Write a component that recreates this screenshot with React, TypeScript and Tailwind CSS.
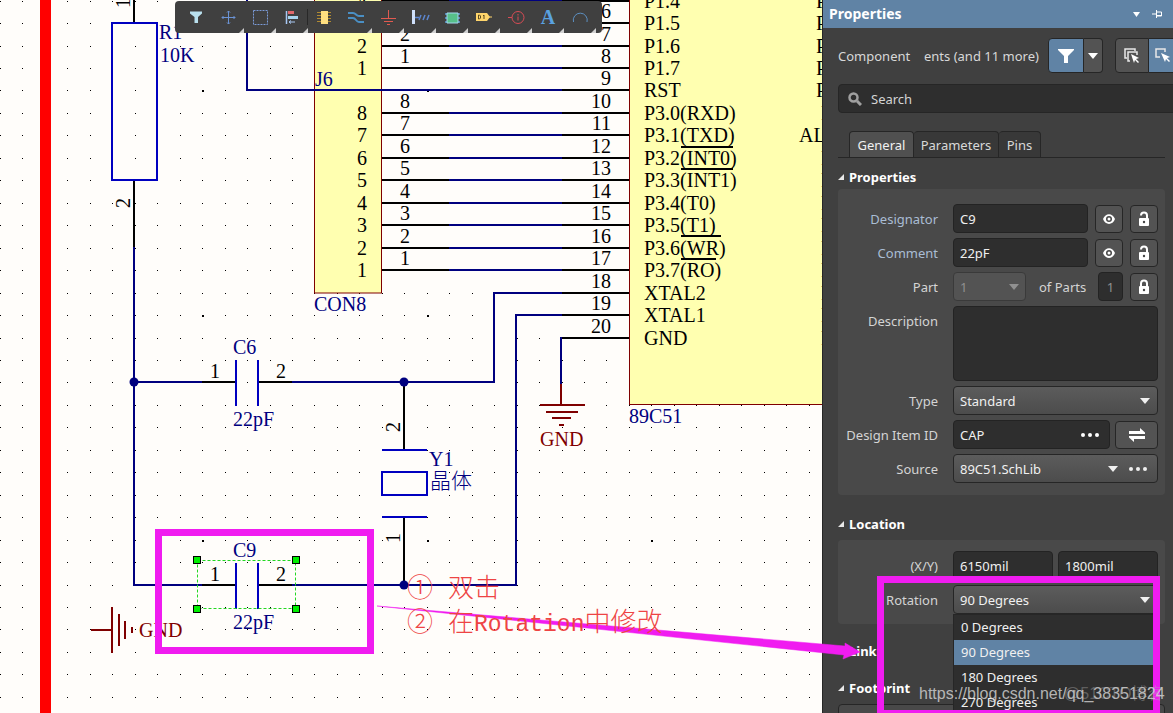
import type { ReactNode } from 'react'

const PITCH = 22.46
const ROW = (i: number) => Math.round(0.6 + i * PITCH)

const WIRE = '#00007f'
const BODY = '#0000c0'
const POWER = '#7f0000'
const FILL = '#ffffb0'
const MARK = '#f01cf0'

const CHIP_PINS = ['P1.4', 'P1.5', 'P1.6', 'P1.7', 'RST', 'P3.0(RXD)', 'P3.1(TXD)', 'P3.2(INT0)', 'P3.3(INT1)', 'P3.4(T0)', 'P3.5(T1)', 'P3.6(WR)', 'P3.7(RO)', 'XTAL2', 'XTAL1', 'GND']

// row index -> connector pin
const CONNECTOR_PINS = [
    [0, 4], [1, 3], [2, 2], [3, 1],
    [5, 8], [6, 7], [7, 6], [8, 5], [9, 4], [10, 3], [11, 2], [12, 1],
]

function gridPath() {
    let d = ''
    for (let i = 0; i < 90; i++) {
        for (let j = 0; j < 60; j++) {
            const size = i % 10 === 9 && j % 10 === 4 ? 2 : 1
            d += `M${Math.round(i * PITCH)} ${ROW(j)}h${size}v${size}h-${size}z`
        }
    }
    return d
}

const GRID = gridPath()

function Capacitor({ y, name }: { y: number; name: string }) {
    return (
        <g>
            <path d={`M202 ${y}H236M258 ${y}H292`} stroke="#000" />
            <path d={`M236 ${y - 22}v46M258 ${y - 22}v46`} stroke={BODY} />
            <g stroke="none">
                <text x="233" y={y - 28} fill={WIRE}>{name}</text>
                <text x="233" y={y + 44} fill={WIRE}>22pF</text>
                <text x="210" y={y - 4}>1</text>
                <text x="276" y={y - 4}>2</text>
            </g>
        </g>
    )
}

function Schematic() {
    return (
        <svg className="block h-full w-full font-['Liberation_Serif','Noto_Sans_CJK_SC',serif] text-[20px]" role="img" aria-label="Schematic">
            <path d={GRID} fill="#000" shapeRendering="crispEdges" />
            <rect x="40" y="0" width="11" height="100%" fill="#ff0000" />

            <g strokeWidth="1" stroke={POWER} fill={FILL}>
                <rect x="314.5" y="-10" width="67" height="303" />
                <rect x="629.5" y="-10" width="400" height="414.500" />
            </g>

            <g strokeWidth="2" fill="none" stroke={WIRE}>
                {CONNECTOR_PINS.map(([row]) => (
                    <path key={row} d={`M448 ${ROW(row)}H563`} />
                ))}
                <path d="M247 0V90H563" />
                <path d="M563 293H494V382H290" />
                <path d="M563 315H516V585H290" />
                <path d="M561 337V384" />
                <path d="M134 246V585H203M134 382H203" />
            </g>

            <g strokeWidth="2" fill="none" stroke="#000">
                {CONNECTOR_PINS.map(([row]) => (
                    <path key={row} d={`M382 ${ROW(row)}H449`} />
                ))}
                {CHIP_PINS.map((pin, row) => (
                    <path key={pin} d={`M562 ${ROW(row)}H629`} />
                ))}
                <path d="M134 0V23M134 181V247" />
                <path d="M404 382V450M404 517V585" />
                <path d="M681 147H733M681 169H733M681 236H721M681 259H716" />
            </g>

            <g strokeWidth="2" fill="none" stroke={BODY}>
                <rect x="112" y="23" width="45" height="157" />
                <path d="M382 450H427M382 517H427" />
                <rect x="382" y="472" width="45" height="23" />
            </g>

            <g strokeWidth="2" fill="none" stroke={POWER}>
                <path d="M561 384V405M540 405H585M546 412H578M552 418H571M559 425H564" />
                <path d="M91 630H112M112 607V653M119 614V646M125 621V639M132 627V633" />
            </g>

            <g fill={WIRE}>
                <circle cx="134" cy="382" r="4.5" />
                <circle cx="404" cy="382" r="4.5" />
                <circle cx="404" cy="585" r="4.5" />
            </g>

            <g strokeWidth="2" fill="#000">
                <Capacitor y={382} name="C6" />
                <Capacitor y={585} name="C9" />
            </g>

            <rect x="197.5" y="560.5" width="98" height="48" fill="none" stroke="#22d822" strokeDasharray="3 2" />
            <g fill="#00f000" stroke="#000">
                <rect x="193.5" y="556.5" width="7" height="7" />
                <rect x="292.5" y="556.5" width="7" height="7" />
                <rect x="193.5" y="605.5" width="7" height="7" />
                <rect x="292.5" y="605.5" width="7" height="7" />
            </g>

            <g fill="#000">
                {CONNECTOR_PINS.map(([row, pin]) => (
                    <g key={row}>
                        <text x="367" y={ROW(row) + 7} textAnchor="end">{pin}</text>
                        <text x="400" y={ROW(row) - 5}>{pin}</text>
                    </g>
                ))}
                {CHIP_PINS.map((pin, row) => (
                    <g key={pin}>
                        <text x="644" y={ROW(row) + 7}>{pin}</text>
                        <text x="611" y={ROW(row) - 5} textAnchor="end">{row + 5}</text>
                        <text x={row < 5 ? 816 : row === 6 ? 799 : 821} y={ROW(row) + 7}>{row === 6 ? 'ALE' : 'P'}</text>
                    </g>
                ))}
                <text transform="translate(130 8) rotate(-90)">1</text>
                <text transform="translate(130 208) rotate(-90)">2</text>
                <text transform="translate(400 432) rotate(-90)">2</text>
                <text transform="translate(400 543) rotate(-90)">1</text>
            </g>

            <g fill={WIRE}>
                <text x="159" y="39">R1</text>
                <text x="160" y="62">10K</text>
                <text x="315" y="86">J6</text>
                <text x="314" y="311">CON8</text>
                <text x="629" y="423">89C51</text>
                <text x="429" y="466">Y1</text>
                <text x="430" y="488" className="text-[21px] font-light">晶体</text>
            </g>
            <g fill={POWER}>
                <text x="540" y="446">GND</text>
                <text x="139" y="637">GND</text>
            </g>
        </svg>
    )
}

const TOOLS: { name: string; menu?: boolean; icon: ReactNode }[] = [
    { name: 'Filter', icon: <path d="M4 4.500h12v2L12 10v6H8.500v-6L4 6.500z" fill="#b9e0ee" /> },
    { name: 'Move', menu: true, icon: <path d="M10.500 4v13M4 10.500h13M9 5.500l1.500-1.500L12 5.500M9 15.500l1.500 1.500 1.500-1.500M5.500 9L4 10.500 5.500 12M15.500 9l1.500 1.500-1.500 1.500" stroke="#6a92d4" /> },
    { name: 'Select area', menu: true, icon: <rect x="3.500" y="3.500" width="14" height="14" stroke="#7a9bd8" strokeDasharray="2 1" /> },
    {
        name: 'Align', menu: true,
        icon: <><path d="M4.500 4v13" stroke="#a8c8f4" strokeWidth="1.500" /><path d="M6 4h6v3H6z" fill="#e0686c" /><path d="M6 9h10v3H6z" fill="#a8d4ee" /><path d="M7 15h6M9 13.500L7 15l2 1.500" stroke="#a8c8f4" /></>,
    },
    {
        name: 'Place part',
        icon: <><path d="M3 5.500h14M3 8.500h14M3 11.500h14M3 14.500h14" stroke="#b08a32" /><path d="M7 4h7v13H7z" fill="#ffdf80" /></>,
    },
    { name: 'Wire', menu: true, icon: <path d="M2 6h5c3 0 3 3 6 3h5M2 11h5c3 0 3 4 6 4h5" stroke="#4a8fc4" strokeWidth="2" /> },
    { name: 'Power port', menu: true, icon: <path d="M10.500 3v8M3 11.500h15M6 14.500h9M9 17.500h3" stroke="#e25a50" /> },
    {
        name: 'Harness', menu: true,
        icon: <><path d="M2 3h3v14H2z" fill="#cfe0fb" /><path d="M5 10.500h4M9 13l2-5M13 13l2-5M17 13l2-5" stroke="#5c86d0" strokeWidth="1.500" /></>,
    },
    {
        name: 'Sheet symbol', menu: true,
        icon: <><path d="M3 7h15M3 11h15M3 15h15" stroke="#5c9cd8" strokeWidth="1.500" /><path d="M5 6h11v10H5z" fill="#57c08a" stroke="#a5d8f0" /></>,
    },
    {
        name: 'Port', menu: true,
        icon: <><path d="M2 6h11l3 4-3 4H2z" fill="#ffd56b" /><path d="M15 10h3" stroke="#ffd56b" /><path d="M4.500 8v4h1l1-1V9l-1-1zM9 9l1-1v4" stroke="#5a4a20" /></>,
    },
    {
        name: 'Directive', menu: true,
        icon: <><circle cx="12" cy="10.500" r="6" stroke="#d84c55" /><path d="M2 10.500h4M12 9.500v4M12 7v1.500" stroke="#d84c55" /></>,
    },
    { name: 'Text', menu: true, icon: <text x="10" y="17" textAnchor="middle" fill="#5aa2e0" className="font-['Liberation_Serif',serif] text-[20px] font-bold">A</text> },
    { name: 'Arc', menu: true, icon: <path d="M3.500 15a7 7 0 1 1 13.500 0" stroke="#5c8fc0" /> },
]

function Toolbar() {
    return (
        <div className="absolute left-[175px] top-px flex h-8 w-[427px] rounded-sm bg-[#404040] pl-[5px]">
            {TOOLS.map(tool => (
                <button key={tool.name} aria-label={tool.name} className="relative flex w-8 shrink-0 items-center justify-center">
                    <svg width="20" height="20" viewBox="0 0 20 20" fill="none">{tool.icon}</svg>
                    {tool.menu && (
                        <svg className="absolute bottom-0 right-0" width="5" height="5"><path d="M5 0v5H0z" fill="#d0d0d0" /></svg>
                    )}
                    {tool.name === 'Align' && <span className="absolute right-0 top-2 h-4 w-px bg-[#282828]" />}
                </button>
            ))}
        </div>
    )
}

const FIELD = 'h-[29px] min-w-0 rounded border border-[#232323] bg-[#2e2e2e] px-1.5 text-[#f0f0f0] outline-none'
const RAISED = 'rounded border border-[#262626] bg-linear-to-b from-[#5c5c5c] to-[#4c4c4c] text-[#f0f0f0] outline-none'
const ICON_BUTTON = 'flex h-7 w-7 shrink-0 items-center justify-center rounded border border-[#262626] bg-[#535353]'

function Caret({ className }: { className?: string }) {
    return <svg className={className} width="10" height="6"><path d="M0 0h10L5 6z" fill="currentColor" /></svg>
}

function Dots() {
    return (
        <svg width="18" height="4" fill="currentColor">
            <circle cx="2" cy="2" r="2" /><circle cx="9" cy="2" r="2" /><circle cx="16" cy="2" r="2" />
        </svg>
    )
}

function EyeButton({ label }: { label: string }) {
    return (
        <button aria-label={label} className={ICON_BUTTON}>
            <svg width="12" height="10" viewBox="0 0 12 10">
                <path d="M0 5c2.500-6.500 9.500-6.500 12 0-2.500 6.500-9.500 6.500-12 0z" fill="#fff" />
                <circle cx="6" cy="5" r="3" fill="#484848" />
                <circle cx="6" cy="5" r="1.500" fill="#fff" />
            </svg>
        </button>
    )
}

function LockButton({ label, locked }: { label: string; locked?: boolean }) {
    return (
        <button aria-label={label} className={ICON_BUTTON}>
            <svg width="12" height="16" viewBox="0 0 12 16" fill="none">
                <path d={locked ? 'M3 8V4.500a3 3 0 0 1 6 0V8' : 'M3 4.500a3 3 0 0 1 6 0V8'} stroke="#fff" strokeWidth="2" />
                <rect x="1" y="7" width="10" height="8" rx="1" fill="#fff" />
                <circle cx="6" cy="11" r="1.200" fill="#444" />
            </svg>
        </button>
    )
}

function Row({ id, label, blue, top, children }: { id: string; label: string; blue?: boolean; top?: boolean; children: ReactNode }) {
    return (
        <div className={top ? 'flex items-start' : 'flex items-center'}>
            <label htmlFor={id} className={`w-[100px] shrink-0 text-right ${blue ? 'text-[#a9bdd4]' : 'text-[#d4d4d4]'} ${top ? 'pt-[5px]' : ''}`}>{label}</label>
            <div className="ml-[15px] flex min-w-0 flex-1 items-center">{children}</div>
        </div>
    )
}

function Heading({ children }: { children: ReactNode }) {
    return (
        <h2 className="flex h-5 items-center gap-[5px] font-bold text-white">
            <svg width="6" height="6"><path d="M6 0v6H0z" fill="#e8e8e8" /></svg>
            {children}
        </h2>
    )
}

function SelectBox({ id, value, children }: { id: string; value: string; children?: ReactNode }) {
    return (
        <div className="relative w-full text-[#f0f0f0]">
            <select id={id} className={`${RAISED} block h-[29px] w-full appearance-none px-1.5`}>
                <option>{value}</option>
            </select>
            <span className={`pointer-events-none absolute inset-y-0 flex items-center gap-[11px] ${children ? 'right-[11px]' : 'right-2'}`}>
                <Caret />
                {children}
            </span>
        </div>
    )
}

function RotationSelect() {
    const options = ['0 Degrees', '90 Degrees', '180 Degrees', '270 Degrees']
    return (
        <div className="relative w-full">
            <SelectBox id="rotation" value="90 Degrees" />
            <ul role="listbox" className="absolute inset-x-0 top-full z-10 border border-[#262626] bg-[#2e2e2e] text-[#f0f0f0]">
                {options.map(option => (
                    <li
                        key={option}
                        role="option"
                        aria-selected={option === '90 Degrees'}
                        className={`h-[25px] px-[7px] leading-[25px] ${option === '90 Degrees' ? 'bg-[#6083a5]' : ''}`}
                    >
                        {option}
                    </li>
                ))}
            </ul>
        </div>
    )
}

function PropertiesPanel() {
    return (
        <aside className="flex w-[351px] shrink-0 flex-col overflow-hidden border-l border-[#262626] bg-[#404040] font-['Noto_Sans',sans-serif] text-[13px] leading-5 text-[#d8d8d8]">
            <header className="flex h-7 shrink-0 items-center bg-[#6083a5] pl-1.5 pr-[11px] text-white">
                <h1 className="flex-1 text-[14px] font-bold">Properties</h1>
                <button aria-label="Panel menu" className="mr-3"><svg width="7" height="5"><path d="M0 0h7L3.500 5z" fill="#fff" /></svg></button>
                <button aria-label="Pin panel">
                    <svg width="10" height="8" fill="none" stroke="#fff"><path d="M0 4h4M4.500 0v8M5 2h4.500v4H5M5 5.500h5" /></svg>
                </button>
            </header>

            <div className="pl-[15px] pr-2">
                <div className="mt-2.5 flex items-center">
                    <span className="w-[86px] shrink-0">Component</span>
                    <span className="w-[124px] shrink-0 whitespace-nowrap">ents (and 11 more)</span>
                    <button aria-label="Filter" className="flex h-[35px] w-9 shrink-0 items-center justify-center rounded-l border border-[#262626] bg-[#6083a5]">
                        <svg width="16" height="14"><path d="M0 0h16v1l-6 6v7H6V7L0 1z" fill="#fff" /></svg>
                    </button>
                    <button aria-label="Filter options" className="mr-3 flex h-[35px] w-[19px] shrink-0 items-center justify-center rounded-r border border-l-0 border-[#262626] bg-[#535353] text-white"><Caret /></button>
                    <button aria-label="Select all touching" className="flex h-[35px] w-[34px] shrink-0 items-center justify-center rounded-l border border-[#262626] bg-[#535353]">
                        <svg width="16" height="16" fill="none"><path d="M3 10H1V1h10v2M6 13H4V4h9v3" stroke="#e8e8e8" strokeWidth="1.500" /><path d="M7 6l8 4-3 1 3 3-1 1-3-3-1 3z" fill="#fff" /></svg>
                    </button>
                    <button aria-label="Select only" className="flex h-[35px] w-[34px] shrink-0 items-center border-y border-[#262626] bg-[#6083a5] pl-1.5">
                        <svg width="16" height="16" fill="none"><path d="M5 9H1V1h9v3" stroke="#e8e8e8" strokeWidth="1.500" /><path d="M6 5l9 4-3 1 3 3-1 1-3-3-1 3z" fill="#fff" /></svg>
                    </button>
                </div>

                <div className="-mr-6 mt-[11px] flex h-[29px] items-center rounded border border-[#262626] bg-[#2e2e2e] pl-[9px]">
                    <svg width="14" height="14" fill="none" stroke="#a0a0a0"><circle cx="5.500" cy="5.500" r="4" strokeWidth="2.500" /><path d="M9 9l4 4" strokeWidth="3" /></svg>
                    <input aria-label="Search" placeholder="Search" className="ml-[9px] flex-1 bg-transparent outline-none placeholder:text-[#d4d4d4]" />
                </div>

                <nav role="tablist" className="mt-[18px] flex border-b border-[#262626] pl-[11px]">
                    <button role="tab" aria-selected="true" className="h-[26px] w-[65px] rounded-t border border-b-0 border-[#262626] bg-[#505050] text-[#f0f0f0]">General</button>
                    <button role="tab" aria-selected="false" className="h-[26px] w-[85px] rounded-t border border-b-0 border-l-0 border-[#262626] bg-[#383838]">Parameters</button>
                    <button role="tab" aria-selected="false" className="h-[26px] w-[42px] rounded-t border border-b-0 border-l-0 border-[#262626] bg-[#383838]">Pins</button>
                </nav>

                <div className="mt-[9px]"><Heading>Properties</Heading></div>
                <section className="mt-0.5 flex flex-col gap-[5px] rounded bg-[#494949] pb-3 pr-[7px] pt-[15px]">
                    <Row id="designator" label="Designator" blue>
                        <input id="designator" defaultValue="C9" className={`${FIELD} mr-[7px] flex-1`} />
                        <EyeButton label="Show designator" />
                        <span className="w-[7px]" />
                        <LockButton label="Lock designator" />
                    </Row>
                    <Row id="comment" label="Comment" blue>
                        <input id="comment" defaultValue="22pF" className={`${FIELD} mr-[7px] flex-1`} />
                        <EyeButton label="Show comment" />
                        <span className="w-[7px]" />
                        <LockButton label="Lock comment" />
                    </Row>
                    <Row id="part" label="Part">
                        <div className="relative w-[73px] text-[#909090]">
                            <select id="part" disabled className="block h-[29px] w-full appearance-none rounded border border-[#3a3a3a] bg-[#535353] px-1.5 text-[#909090]"><option>1</option></select>
                            <Caret className="pointer-events-none absolute right-[7px] top-3" />
                        </div>
                        <label htmlFor="parts" className="flex-1 pl-[13px] text-[#d4d4d4]">of Parts</label>
                        <input id="parts" disabled defaultValue="1" className="mr-[7px] h-[29px] w-[25px] rounded border border-[#232323] bg-[#2e2e2e] text-center text-[#909090]" />
                        <LockButton label="Lock part" locked />
                    </Row>
                    <Row id="description" label="Description" top>
                        <textarea id="description" className="block h-[75px] w-full resize-none rounded border border-[#232323] bg-[#2e2e2e] outline-none" />
                    </Row>
                    <Row id="type" label="Type">
                        <SelectBox id="type" value="Standard" />
                    </Row>
                    <Row id="item" label="Design Item ID">
                        <div className="relative mr-[5px] flex min-w-0 flex-1">
                            <input id="item" defaultValue="CAP" className={`${FIELD} w-full`} />
                            <button aria-label="Browse items" className="absolute inset-y-0 right-[11px] text-white"><Dots /></button>
                        </div>
                        <button aria-label="Swap item" className="flex h-7 w-[43px] shrink-0 items-center justify-center rounded border border-[#262626] bg-[#535353]">
                            <svg width="16" height="14" fill="#fff"><path d="M0 3h11V0l5 4.500V6H0zM16 11H5v3L0 9.500V8h16z" /></svg>
                        </button>
                    </Row>
                    <Row id="source" label="Source">
                        <SelectBox id="source" value="89C51.SchLib"><Dots /></SelectBox>
                    </Row>
                </section>

                <div className="mt-[19px]"><Heading>Location</Heading></div>
                <section className="mt-1.5 flex flex-col gap-[5px] rounded bg-[#494949] pb-2.5 pr-[7px] pt-[11px]">
                    <Row id="x" label="(X/Y)">
                        <input id="x" defaultValue="6150mil" className={`${FIELD} mr-[5px] w-0 flex-1`} />
                        <input aria-label="Y" defaultValue="1800mil" className={`${FIELD} w-0 flex-1`} />
                    </Row>
                    <Row id="rotation" label="Rotation">
                        <RotationSelect />
                    </Row>
                </section>

                <div className="mt-[17px]"><Heading>Links</Heading></div>
                <div className="mt-[17px]"><Heading>Footprint</Heading></div>
                <section className="mt-1.5 h-20 rounded border border-[#262626] bg-[#494949]" />
            </div>
        </aside>
    )
}

function Annotations() {
    return (
        <svg className="pointer-events-none absolute inset-0 z-20 h-full w-full">
            <g fill="none" stroke={MARK} strokeWidth="7">
                <rect x="158.500" y="532.500" width="212" height="118" />
                <rect x="880.500" y="579.500" width="276" height="134" />
            </g>
            <path d="M377 606L845 646V643L860 652L843 659L844 655Z" fill={MARK} stroke={MARK} strokeWidth="0.500" />
            <g fill="#ee4444" className="font-['Noto_Sans_CJK_SC',sans-serif] text-[26px] font-light">
                <text x="407" y="597">①</text>
                <text x="448" y="597">双击</text>
                <text x="407" y="631">②</text>
                <text x="448" y="631">在<tspan className="font-['Liberation_Mono',monospace] text-[23px] font-normal">Rotation</tspan>中修改</text>
            </g>
            <g className="font-['Liberation_Sans','Noto_Sans_CJK_SC',sans-serif] text-[16px]">
                <text x="1064" y="699" fill="#b0b0b0" fillOpacity="0.400">@51CTO博客</text>
                <text x="919" y="699" fill="#d8d8d8" fillOpacity="0.800">https://blog.csdn.net/qq_38351824</text>
            </g>
        </svg>
    )
}

export default function App() {
    return (
        <div className="relative flex h-screen overflow-hidden bg-[#fffdfa]">
            <main className="relative min-w-0 flex-1 overflow-hidden">
                <Schematic />
                <Toolbar />
            </main>
            <PropertiesPanel />
            <Annotations />
        </div>
    )
}
